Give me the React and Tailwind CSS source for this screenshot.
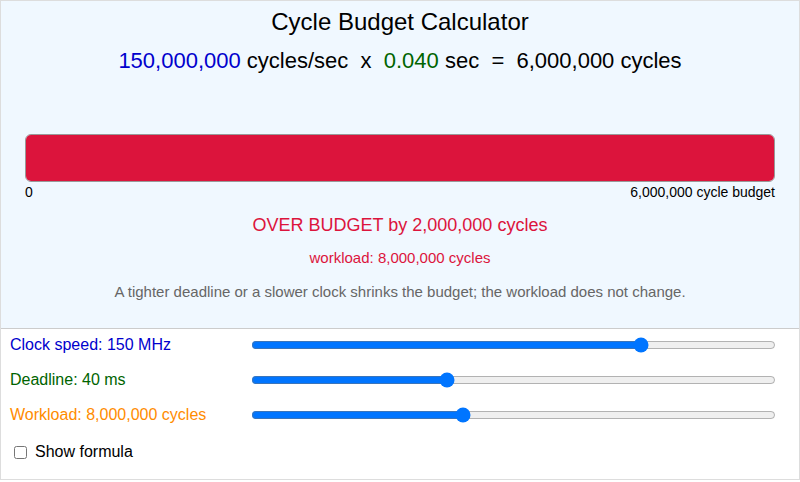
import { useState } from 'react'

const fmt = (n) => n.toLocaleString('en-US')

export default function App() {
  const [mhz, setMhz] = useState(150)
  const [ms, setMs] = useState(40)
  const [work, setWork] = useState(8000000)
  const [showFormula, setShowFormula] = useState(false)

  const hz = mhz * 1000000
  const sec = ms / 1000
  const budget = Math.round(hz * sec)
  const over = work > budget
  const pct = Math.min(100, (work / budget) * 100)

  return (
    <div className="w-[800px] h-[480px] border border-[#ddd] bg-white text-black" style={{ fontFamily: '"Liberation Sans", Arial, sans-serif' }}>
      {/* Top: budget display */}
      <div className="h-[328px] bg-[#f0f8ff] border-b border-[#ccc] pt-[7px] px-6 flex flex-col">
        <h1 className="text-[24px] leading-[28px] text-center">Cycle Budget Calculator</h1>
        <div className="mt-3 text-[22px] leading-[26px] text-center whitespace-pre">
          <span className="text-[#0000cd]">{fmt(hz)}</span>
          <span> cycles/sec  x  </span>
          <span className="text-[#006400]">{sec.toFixed(3)}</span>
          <span> sec  =  {fmt(budget)} cycles</span>
        </div>

        <div className="mt-[60px] h-[48px] rounded-[6px] border border-[#999] bg-[#f0f8ff] overflow-hidden">
          <div className={`h-full ${over ? 'bg-[#dc143c]' : 'bg-[#2e8b57]'}`} style={{ width: `${pct}%` }} />
        </div>
        <div className="mt-[2px] flex justify-between text-[14px] leading-[16px]">
          <span>0</span>
          <span>{fmt(budget)} cycle budget</span>
        </div>

        <div className={`mt-[14px] text-[18px] leading-[22px] text-center ${over ? 'text-[#dc143c]' : 'text-[#2e8b57]'}`}>
          {over ? `OVER BUDGET by ${fmt(work - budget)} cycles` : `${fmt(budget - work)} cycles to spare`}
        </div>
        <div className={`mt-[13px] text-[15px] leading-[18px] text-center ${over ? 'text-[#dc143c]' : 'text-[#2e8b57]'}`}>
          workload: {fmt(work)} cycles
        </div>
        <p className="mt-4 text-[15px] leading-[18px] text-center text-[#666]">
          A tighter deadline or a slower clock shrinks the budget; the workload does not change.
        </p>
      </div>

      {/* Bottom: controls */}
      <div className="pt-[6px] pl-[9px] flex flex-col gap-[15px] text-[16px] leading-[20px]">
        <div className="flex items-center h-[20px]">
          <label className="w-[241px] text-[#0000cd]">Clock speed: {mhz} MHz</label>
          <input type="range" min="0" max="200" value={mhz} onChange={(e) => setMhz(+e.target.value)} className="w-[525px]" />
        </div>
        <div className="flex items-center h-[20px]">
          <label className="w-[241px] text-[#006400]">Deadline: {ms} ms</label>
          <input type="range" min="5" max="100" value={ms} onChange={(e) => setMs(+e.target.value)} className="w-[525px]" />
        </div>
        <div className="flex items-center h-[20px]">
          <label className="w-[241px] text-[#ff8c00]">Workload: {fmt(work)} cycles</label>
          <input type="range" min="0" max="20000000" step="100000" value={work} onChange={(e) => setWork(+e.target.value)} className="w-[525px]" />
        </div>
        <label className="mt-[2px] flex items-center h-[20px]">
          <input type="checkbox" checked={showFormula} onChange={(e) => setShowFormula(e.target.checked)} className="ml-1 mr-[8px] w-[13px] h-[13px]" />
          Show formula
        </label>
      </div>
    </div>
  )
}
